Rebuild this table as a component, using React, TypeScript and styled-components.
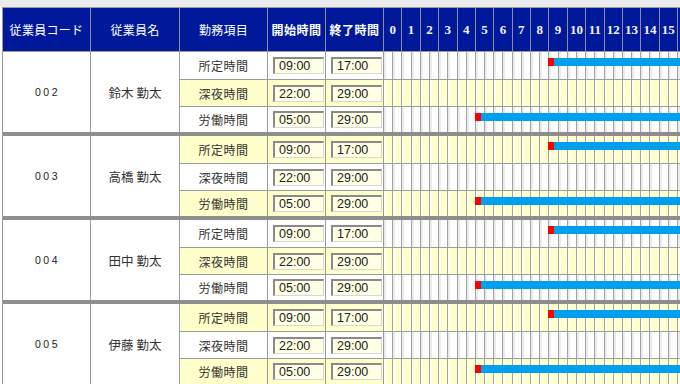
import React from 'react';
import styled, { createGlobalStyle } from 'styled-components';

const HOUR_W = 18.375;
const HOURS = 17;
const LINE = '#9c9c9c';
const YELLOW = '#ffffcc';

interface Member {
  code: string;
  name: string;
}

interface WorkItem {
  label: string;
  from: string;
  to: string;
  start: number;
  end: number;
}

const members: Member[] = [
  { code: '002', name: '鈴木 勤太' },
  { code: '003', name: '高橋 勤太' },
  { code: '004', name: '田中 勤太' },
  { code: '005', name: '伊藤 勤太' },
];

const items: WorkItem[] = [
  { label: '所定時間', from: '09:00', to: '17:00', start: 9, end: 17 },
  { label: '深夜時間', from: '22:00', to: '29:00', start: 22, end: 29 },
  { label: '労働時間', from: '05:00', to: '29:00', start: 5, end: 29 },
];

const rowHeights = [27, 26, 25];

const GlobalStyle = createGlobalStyle`
  html, body {
    margin: 0;
    padding: 0;
    background: #fff;
    overflow: hidden;
    font-family: 'Noto Sans CJK JP', 'Noto Sans', sans-serif;
  }
`;

const TopStrip = styled.div`
  height: 7px;
  background: #ececec;
`;

const Sheet = styled.div`
  margin-left: 2px;
  width: max-content;
  border-left: 1px solid ${LINE};
  border-top: 1px solid ${LINE};
`;

const HeaderRow = styled.div`
  display: flex;
  height: 43px;
  background: #00199a;
  border-bottom: 1px solid ${LINE};
  color: #fff;
`;

const HeadCell = styled.div<{ $w: number; $bold?: boolean }>`
  flex: 0 0 ${(p) => p.$w}px;
  box-sizing: border-box;
  border-right: 1px solid #8c8c9c;
  display: flex;
  align-items: center;
  justify-content: center;
  font-size: 12px;
  font-weight: ${(p) => (p.$bold ? 700 : 400)};
  letter-spacing: ${(p) => (p.$bold ? '0.5px' : '0.3px')};
`;

const HourHead = styled.div`
  flex: 0 0 ${HOUR_W}px;
  box-sizing: border-box;
  border-right: 1px solid #8c8c9c;
  display: flex;
  align-items: center;
  justify-content: center;
  font-family: 'Liberation Serif', serif;
  font-weight: 700;
  font-size: 13px;
  color: #f2f2fa;
  padding-top: 1px;
`;

const Group = styled.div`
  display: flex;
  border-bottom: 4px solid #8e8e8e;
`;

const CodeCell = styled.div`
  flex: 0 0 88px;
  box-sizing: border-box;
  border-right: 1px solid ${LINE};
  background: #fff;
  display: flex;
  align-items: center;
  justify-content: center;
  font-family: 'Liberation Sans', sans-serif;
  font-size: 10.5px;
  letter-spacing: 2.5px;
  padding-left: 2px;
  color: #222;
`;

const NameCell = styled.div`
  flex: 0 0 89px;
  box-sizing: border-box;
  border-right: 1px solid ${LINE};
  background: #fff;
  display: flex;
  align-items: center;
  justify-content: center;
  font-size: 12.5px;
  color: #333;
`;

const Rows = styled.div`
  display: flex;
  flex-direction: column;
`;

const Row = styled.div<{ $h: number; $alt: boolean; $last: boolean }>`
  display: flex;
  height: ${(p) => p.$h}px;
  box-sizing: content-box;
  background: ${(p) => (p.$alt ? YELLOW : '#fff')};
  border-bottom: ${(p) => (p.$last ? 'none' : `1px solid ${LINE}`)};
`;

const LabelCell = styled.div`
  flex: 0 0 88px;
  box-sizing: border-box;
  border-right: 1px solid ${LINE};
  display: flex;
  align-items: center;
  justify-content: center;
  font-size: 12px;
  letter-spacing: 0.5px;
  color: #333;
`;

const TimeCell = styled.div`
  flex: 0 0 58px;
  box-sizing: border-box;
  border-right: 1px solid ${LINE};
  display: flex;
  align-items: center;
  padding-left: 5px;
`;

const TimeInput = styled.input`
  width: 51px;
  height: 17px;
  box-sizing: border-box;
  margin: 0;
  padding: 0 0 0 4px;
  border-style: solid;
  border-width: 2px 1px 1px 2px;
  border-color: #8a8a8a #d8d8d8 #d8d8d8 #8a8a8a;
  background: #ffffe6;
  font-family: 'Liberation Sans', sans-serif;
  font-size: 12.5px;
  color: #222;
  outline: none;
`;

const Timeline = styled.div`
  position: relative;
  display: flex;
`;

const HalfCell = styled.div<{ $alt: boolean }>`
  flex: 0 0 ${HOUR_W / 2}px;
  box-sizing: border-box;
  border-right: 1px solid #a4a4a4;
  box-shadow: inset 2px 0 0 ${(p) => (p.$alt ? '#fffff2' : '#ebebeb')};
`;

const Bar = styled.div`
  position: absolute;
  top: 6px;
  height: 8px;
  display: flex;
`;

const StartMark = styled.div`
  flex: 0 0 6px;
  background: #ff0000;
`;

const BarFill = styled.div`
  flex: 1;
  background: #00a0ee;
`;

const hourList = Array.from({ length: HOURS }, (_, i) => i);
const halfList = Array.from({ length: HOURS * 2 }, (_, i) => i);

const App: React.FC = () => {
  return (
    <>
      <GlobalStyle />
      <TopStrip />
      <Sheet>
        <HeaderRow>
          <HeadCell $w={88}>従業員コード</HeadCell>
          <HeadCell $w={89}>従業員名</HeadCell>
          <HeadCell $w={88}>勤務項目</HeadCell>
          <HeadCell $w={58} $bold>開始時間</HeadCell>
          <HeadCell $w={58} $bold>終了時間</HeadCell>
          {hourList.map((h) => (
            <HourHead key={h}>{h}</HourHead>
          ))}
        </HeaderRow>

        {members.map((m, gi) => (
          <Group key={m.code}>
            <CodeCell>{m.code}</CodeCell>
            <NameCell>{m.name}</NameCell>
            <Rows>
              {items.map((it, ri) => {
                const alt = (gi * 3 + ri) % 2 === 1;
                const end = Math.min(it.end, HOURS);
                return (
                  <Row key={it.label} $h={rowHeights[ri]} $alt={alt} $last={ri === items.length - 1}>
                    <LabelCell>{it.label}</LabelCell>
                    <TimeCell>
                      <TimeInput value={it.from} readOnly />
                    </TimeCell>
                    <TimeCell>
                      <TimeInput value={it.to} readOnly />
                    </TimeCell>
                    <Timeline>
                      {halfList.map((i) => (
                        <HalfCell key={i} $alt={alt} />
                      ))}
                      {it.start < HOURS && (
                        <Bar
                          style={{
                            left: it.start * HOUR_W - 1,
                            width: (end - it.start) * HOUR_W,
                          }}
                        >
                          <StartMark />
                          <BarFill />
                        </Bar>
                      )}
                    </Timeline>
                  </Row>
                );
              })}
            </Rows>
          </Group>
        ))}
      </Sheet>
    </>
  );
};

export default App;
